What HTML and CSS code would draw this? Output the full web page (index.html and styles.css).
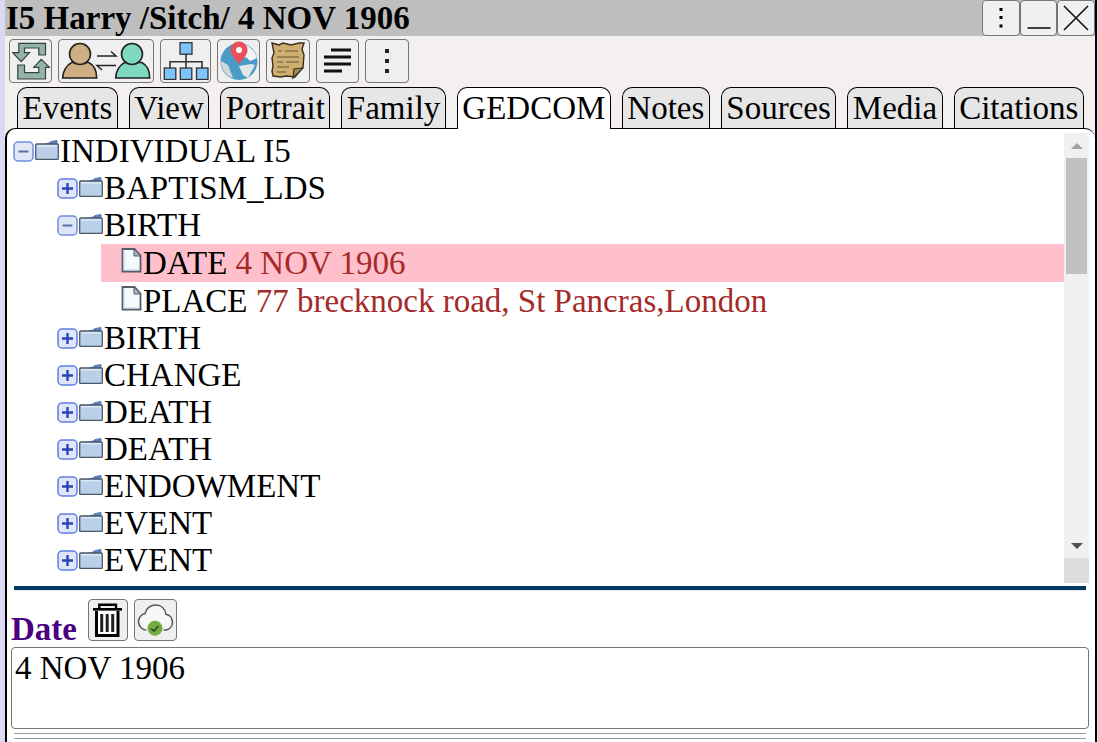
FILE: index.html
```html
<!DOCTYPE html>
<html lang="en">
<head>
    <meta charset="UTF-8">
    <title>I5 Harry /Sitch/ 4 NOV 1906</title>
    <link rel="stylesheet" href="styles.css">
</head>
<body>
    <svg class="icon-defs" width="0" height="0">
        <symbol id="folder" viewBox="0 0 24 20">
            <path d="M10 4l4-1 2-1.500 6-1v4z" fill="#5b7fb8" stroke="#5b7fb8"/>
            <rect x="0.700" y="4" width="22.600" height="15.500" rx="1" fill="#b9d0e8" stroke="#4c5a68" stroke-width="1.300"/>
            <path d="M2 5.800h20" stroke="#e4eef8" stroke-width="1.200"/>
        </symbol>
        <symbol id="plus" viewBox="0 0 21 21">
            <rect x="1" y="1" width="19" height="19" rx="4" fill="#dfe6fa" stroke="#5f7fe0" stroke-width="1.500"/>
            <path d="M5 10.500h11M10.500 5v11" stroke="#2a45b8" stroke-width="2.400"/>
        </symbol>
        <symbol id="minus" viewBox="0 0 21 21">
            <rect x="1" y="1" width="19" height="19" rx="4" fill="#dfe6f6" stroke="#6f8de0" stroke-width="1.500"/>
            <path d="M5.500 10.500h10" stroke="#5a6fa8" stroke-width="2"/>
        </symbol>
        <symbol id="leaf" viewBox="0 0 21 25">
            <path d="M1.500 1h12l6 6.500v16h-18z" fill="#f6f9fc" stroke="#555d68" stroke-width="1.800"/>
            <path d="M3 3v19h15" fill="none" stroke="#c3d3e6" stroke-width="1.200"/>
            <path d="M13 1v7h6.500z" fill="#aab6c4" stroke="#555d68"/>
        </symbol>
    </svg>

    <div class="window">
        <header class="titlebar">
            <h1>I5 Harry /Sitch/ 4 NOV 1906</h1>
            <div class="window-btns">
                <button class="win-btn">
                    <svg width="4" height="20" viewBox="0 0 4 20"><path d="M.5 0h3v3h-3zM.5 8h3v3h-3zM.5 16.500h3v3h-3z"/></svg>
                </button>
                <button class="win-btn win-min">
                    <svg width="24" height="26" viewBox="0 0 24 26"><path d="M.5 23h23" stroke="#111" stroke-width="1.600"/></svg>
                </button>
                <button class="win-btn win-close">
                    <svg width="26" height="26" viewBox="0 0 26 26"><path d="M1 1l24 24M25 1L1 25" stroke="#111" stroke-width="1.600"/></svg>
                </button>
            </div>
        </header>

        <div class="toolbar">
            <button class="tool-btn">
                <svg width="38" height="38" viewBox="0 0 38 38">
                    <path d="M33.500 1.300H6.800v9.400H.8l8.400 9 8.300-9h-5V6h14.300v7h6.700z" fill="#93b5a6" stroke="#34423c" stroke-width="1.200"/>
                    <path d="M5.800 23h6.700v7.700h14.300v-5.400h-5l7.400-8 8.300 8h-4V37H5.800z" fill="#93b5a6" stroke="#34423c" stroke-width="1.200"/>
                </svg>
            </button>
            <button class="tool-btn tool-wide">
                <svg width="90" height="38" viewBox="0 0 90 38">
                    <path d="M1.700 36c0-7 4-13 9-15.500h17c5 2.500 8 8.500 8 15.500z" fill="#cfae84" stroke="#222" stroke-width="1.600"/>
                    <circle cx="19" cy="12" r="10.500" fill="#cfae84" stroke="#222" stroke-width="1.600"/>
                    <path d="M54.700 36c0-7 4-13 9-15.500h17c5 2.500 8 8.500 8 15.500z" fill="#7fd8c0" stroke="#222" stroke-width="1.600"/>
                    <circle cx="71" cy="12" r="10.500" fill="#7fd8c0" stroke="#222" stroke-width="1.600"/>
                    <path d="M36 14h19l-5-4.500M55 23.500H36l5 4.500" fill="none" stroke="#222" stroke-width="1.500"/>
                </svg>
            </button>
            <button class="tool-btn tool-tree">
                <svg width="46" height="38" viewBox="0 0 46 38">
                    <rect x="17" y="0.700" width="12" height="11.500" fill="#7cc4fa" stroke="#333" stroke-width="1.300"/>
                    <path d="M23 12v14M7 26v-6.300h32V26" fill="none" stroke="#333" stroke-width="1.600"/>
                    <rect x="1.300" y="26" width="11.500" height="11.500" fill="#7cc4fa" stroke="#333" stroke-width="1.300"/>
                    <rect x="17.300" y="26" width="11.500" height="11.500" fill="#7cc4fa" stroke="#333" stroke-width="1.300"/>
                    <rect x="33.500" y="26" width="11.500" height="11.500" fill="#7cc4fa" stroke="#333" stroke-width="1.300"/>
                </svg>
            </button>
            <button class="tool-btn">
                <svg width="40" height="40" viewBox="0 0 40 40">
                    <circle cx="20" cy="20.500" r="18.500" fill="#4a9cc7"/>
                    <path d="M24 3c7 2 12 7 14 14l-7 3-4-4-9 4-4-7z" fill="#f3f5f6"/>
                    <path d="M20 25l12-2 4 1-7 13-5-3z" fill="#e2e4e5"/>
                    <path d="M2 20c0 8 5 15 12 17l-5-13z" fill="#d5d8da"/>
                    <path d="M20 23C14 16 11.500 13 11.500 9a8.500 8.500 0 0 1 17 0c0 4-2.500 7-8.500 14z" fill="#e8505b"/>
                    <circle cx="20" cy="9" r="3" fill="#fff"/>
                </svg>
            </button>
            <button class="tool-btn tool-scroll">
                <svg width="36" height="38" viewBox="0 0 36 38">
                    <path d="M2 1l7 2 4-2 8 2 8-2 5 0-2 6 2 6-1 12-8 10-9-1-5 1-8-1-1-5 1-5-1-8 2-5z" fill="#cfae70" stroke="#3a3020" stroke-width="1.400"/>
                    <path d="M33 26l-9 1-1 9z" fill="#a88c58" stroke="#3a3020" stroke-width="1.200"/>
                    <path d="M8 9h4M15 9h13M7 15h22M7 20h6M16 20h13M7 25h12M7 30h9" stroke="#8a7248" stroke-width="1.500"/>
                </svg>
            </button>
            <button class="tool-btn">
                <svg width="30" height="26" viewBox="0 0 30 26"><path d="M8 2h20M1 9h27M1 16h27M1 23h18" stroke="#111" stroke-width="2.800"/></svg>
            </button>
            <button class="tool-btn tool-more">
                <svg width="4" height="24" viewBox="0 0 4 24"><path d="M0 0h4v4H0zM0 10h4v4H0zM0 20h4v4H0z" fill="#222"/></svg>
            </button>
        </div>

        <nav class="tabs">
            <span class="tab">Events</span>
            <span class="tab">View</span>
            <span class="tab">Portrait</span>
            <span class="tab">Family</span>
            <span class="tab active">GEDCOM</span>
            <span class="tab">Notes</span>
            <span class="tab">Sources</span>
            <span class="tab">Media</span>
            <span class="tab">Citations</span>
        </nav>

        <main class="panel">
            <div class="tree-wrap">
                <ul class="tree">
                    <li class="node"><svg class="tog"><use href="#minus"/></svg><svg class="fld"><use href="#folder"/></svg>INDIVIDUAL I5</li>
                    <li class="node lvl1"><svg class="tog"><use href="#plus"/></svg><svg class="fld"><use href="#folder"/></svg>BAPTISM_LDS</li>
                    <li class="node lvl1"><svg class="tog"><use href="#minus"/></svg><svg class="fld"><use href="#folder"/></svg>BIRTH</li>
                    <li class="node lvl2 selected"><svg class="doc"><use href="#leaf"/></svg>DATE <span class="val">4 NOV 1906</span></li>
                    <li class="node lvl2"><svg class="doc"><use href="#leaf"/></svg>PLACE <span class="val">77 brecknock road, St Pancras,London</span></li>
                    <li class="node lvl1"><svg class="tog"><use href="#plus"/></svg><svg class="fld"><use href="#folder"/></svg>BIRTH</li>
                    <li class="node lvl1"><svg class="tog"><use href="#plus"/></svg><svg class="fld"><use href="#folder"/></svg>CHANGE</li>
                    <li class="node lvl1"><svg class="tog"><use href="#plus"/></svg><svg class="fld"><use href="#folder"/></svg>DEATH</li>
                    <li class="node lvl1"><svg class="tog"><use href="#plus"/></svg><svg class="fld"><use href="#folder"/></svg>DEATH</li>
                    <li class="node lvl1"><svg class="tog"><use href="#plus"/></svg><svg class="fld"><use href="#folder"/></svg>ENDOWMENT</li>
                    <li class="node lvl1"><svg class="tog"><use href="#plus"/></svg><svg class="fld"><use href="#folder"/></svg>EVENT</li>
                    <li class="node lvl1"><svg class="tog"><use href="#plus"/></svg><svg class="fld"><use href="#folder"/></svg>EVENT</li>
                </ul>
                <div class="scrollbar">
                    <div class="arrow arrow-up"></div>
                    <div class="track"><div class="thumb"></div></div>
                    <div class="arrow arrow-down"></div>
                    <div class="corner"></div>
                </div>
            </div>

            <div class="divider"></div>

            <div class="editor-head">
                <span class="editor-label">Date</span>
                <button class="tool-btn small trash">
                    <svg width="30" height="38" viewBox="0 0 30 38">
                        <path d="M6.300 8V3.700H23V8" fill="none" stroke="#000" stroke-width="2.400"/>
                        <path d="M0 8.300h29" stroke="#000" stroke-width="2.600"/>
                        <path d="M3.500 10v24.500h21.500V10" fill="#fff" stroke="#000" stroke-width="3"/>
                        <path d="M8.700 13v18M14.200 13v18M19.700 13v18" stroke="#222" stroke-width="3"/>
                    </svg>
                </button>
                <button class="tool-btn small">
                    <svg width="38" height="36" viewBox="0 0 38 36">
                        <path d="M11 28a8.300 8.300 0 0 1-2-16.400C10 6 15 3 20 3c5 0 9 3.500 10 9.300A8 8 0 0 1 30 28z" fill="#f7f7f7" stroke="#4a5860" stroke-width="1.500"/>
                        <circle cx="19" cy="26.300" r="9" fill="#f0f0f0"/>
                        <circle cx="19" cy="26.300" r="7.500" fill="#74ad3f"/>
                        <path d="M15 26.500l3 2.500 4.500-5" fill="none" stroke="#2c3a22" stroke-width="1.500"/>
                    </svg>
                </button>
            </div>
            <textarea class="editor-text" spellcheck="false">4 NOV 1906</textarea>
            <div class="rule"></div>
            <div class="rule"></div>
        </main>
    </div>
</body>
</html>
```

FILE: styles.css
```css
html, body {
    margin: 0;
    padding: 0;
    height: 100%;
    overflow: hidden;
}

body {
    background-color: #dcd9f3;
    font-family: 'Liberation Serif', serif;
    color: #000;
}

.icon-defs {
    display: block;
    height: 0;
}

button {
    padding: 0;
    margin: 0;
    font: inherit;
}

.window {
    box-sizing: border-box;
    margin-left: 5px;
    width: 1092px;
    height: 742px;
    background-color: #f3f0ef;
    border-right: 2px solid #000;
    display: flex;
    flex-direction: column;
}

/* title bar */
.titlebar {
    height: 36px;
    padding-left: 1px;
    background-color: #bebebe;
    display: flex;
    justify-content: space-between;
    flex-shrink: 0;
}

.titlebar h1 {
    margin: 0;
    font-size: 33px;
    line-height: 36px;
    font-weight: bold;
    white-space: nowrap;
}

.window-btns {
    display: flex;
}

.win-btn {
    box-sizing: border-box;
    width: 38px;
    height: 36px;
    background-color: #f0f0f0;
    border: 1px solid #767676;
    border-radius: 4px;
    display: flex;
    align-items: center;
    justify-content: center;
}

.win-min {
    width: 37px;
}

/* toolbar */
.toolbar {
    display: flex;
    gap: 6px;
    padding: 3px 0 0 4px;
    height: 44px;
    flex-shrink: 0;
}

.tool-btn {
    box-sizing: border-box;
    width: 43px;
    height: 44px;
    background-color: #efefef;
    border: 1px solid #767676;
    border-radius: 4px;
    display: flex;
    align-items: center;
    justify-content: center;
}

.tool-wide {
    width: 96px;
}

.tool-tree {
    width: 51px;
}

.tool-scroll, .tool-more {
    width: 44px;
}

/* tabs */
.tabs {
    display: flex;
    gap: 11px;
    padding: 4px 0 0 12px;
    height: 41px;
    flex-shrink: 0;
}

.tab {
    box-sizing: border-box;
    height: 41px;
    padding: 1px 4.500px 0;
    font-size: 33px;
    line-height: 38px;
    background-color: #e6e6e6;
    border: 1px solid #000;
    border-bottom: none;
    border-radius: 10px 10px 0 0;
    white-space: nowrap;
}

.tab.active {
    background-color: #fff;
    height: 42px;
    position: relative;
    z-index: 1;
}

/* panel under the tabs */
.panel {
    flex: 1;
    min-height: 0;
    background-color: #fff;
    border-top: 1px solid #000;
    border-left: 2px solid #000;
    border-radius: 10px 10px 0 0;
    padding: 4px 6px 0 4px;
    overflow: hidden;
}

.tree-wrap {
    display: flex;
    height: 450px;
}

.tree {
    flex: 1;
    list-style: none;
    margin: 0;
    padding: 0;
    overflow: hidden;
}

.node {
    display: flex;
    align-items: center;
    height: 37px;
    font-size: 33px;
    white-space: pre;
}

.lvl1 {
    padding-left: 44px;
}

.lvl2 {
    height: 38px;
    padding-left: 110px;
}

.selected {
    margin-left: 90px;
    padding-left: 20px;
    background-color: #ffc0cb;
}

.val {
    color: #a52a2a;
}

.tog {
    width: 21px;
    height: 21px;
    margin-left: 2px;
    flex-shrink: 0;
}

.fld {
    width: 24px;
    height: 20px;
    margin: 0 1px 4px 1px;
    flex-shrink: 0;
}

.doc {
    width: 21px;
    height: 25px;
    margin: 0 1px 6px 0;
    flex-shrink: 0;
}

/* fake scrollbar, same look as chrome on windows */
.scrollbar {
    width: 25px;
    display: flex;
    flex-direction: column;
    background-color: #f0f0f0;
    flex-shrink: 0;
}

.arrow {
    height: 25px;
    flex-shrink: 0;
    display: flex;
    align-items: center;
    justify-content: center;
}

.arrow::before {
    content: "";
    border-left: 6px solid transparent;
    border-right: 6px solid transparent;
}

.arrow-up::before {
    border-bottom: 6px solid #a3a3a3;
}

.arrow-down::before {
    border-top: 6px solid #505050;
}

.track {
    flex: 1;
    padding: 0 2px;
}

.thumb {
    height: 116px;
    background-color: #c1c1c1;
}

.corner {
    height: 25px;
    flex-shrink: 0;
    background-color: #dcdcdc;
}

.divider {
    height: 4px;
    margin: 3px 3px 0 3px;
    background-color: #003a63;
    border-bottom: 1px solid #e4e8ea;
}

/* date editor */
.editor-head {
    display: flex;
    align-items: flex-end;
    gap: 6px;
    height: 42px;
    margin-top: 8px;
}

.editor-label {
    font-size: 33px;
    font-weight: bold;
    color: #4b0082;
    line-height: 32px;
    margin-right: 5px;
    margin-bottom: -4px;
}

.tool-btn.small {
    height: 42px;
}

.tool-btn.trash {
    width: 40px;
}

.editor-text {
    display: block;
    box-sizing: border-box;
    width: 1078px;
    height: 82px;
    margin: 6px 0 0 0;
    padding: 2px 3px;
    font-family: 'Liberation Serif', serif;
    font-size: 33px;
    line-height: 36px;
    border: 1px solid #767676;
    border-radius: 4px;
    resize: none;
    outline: none;
    overflow: hidden;
}

.rule {
    height: 1px;
    margin: 4px 3px 0 3px;
    background-color: #9a9a9a;
}
```
